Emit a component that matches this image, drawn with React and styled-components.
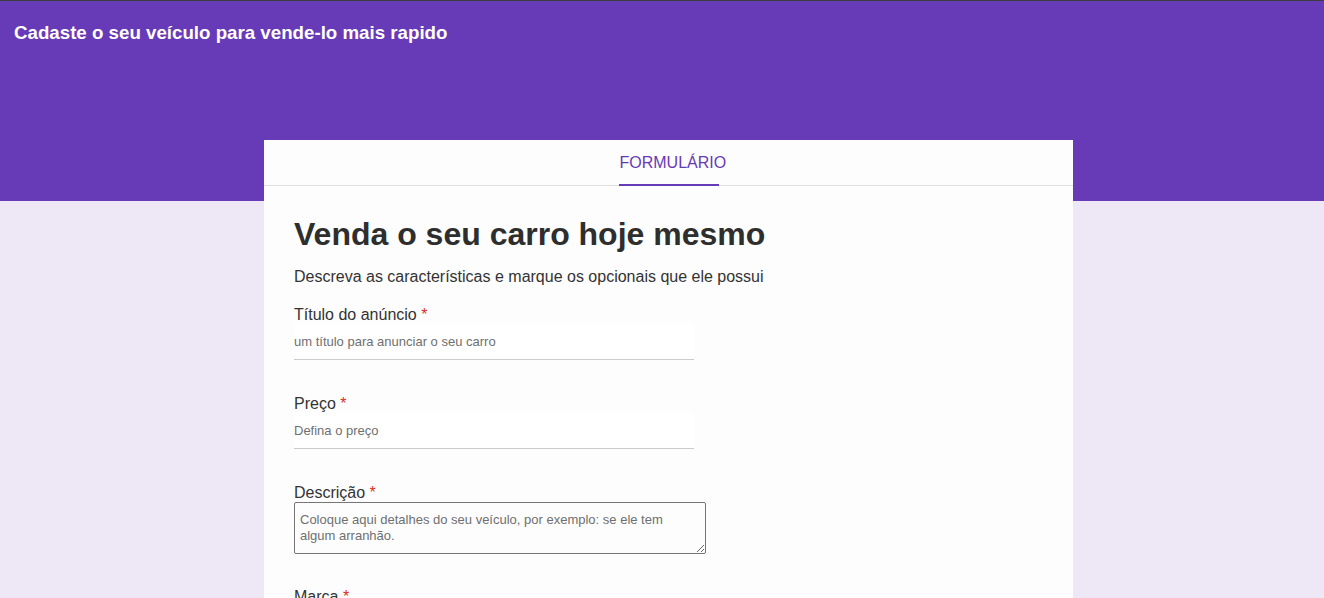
import React from 'react';
import styled, { createGlobalStyle } from 'styled-components';

const GlobalStyle = createGlobalStyle`
  body {
    margin: 0;
    background: #ede7f6;
    font-family: 'Liberation Sans', Arial, sans-serif;
    border-top: 1px solid #3c3c3c;
  }
`;

const Header = styled.header`
  height: 200px;
  background: #673ab7;
  padding: 21px 14px 0;
  box-sizing: border-box;
`;

const HeaderTitle = styled.h1`
  margin: 0;
  color: #ffffff;
  font-size: 18.72px;
  font-weight: bold;
  line-height: 22px;
`;

const Card = styled.main`
  width: 809px;
  margin: -61px 0 0 264px;
  background: #fdfdfd;
  min-height: 500px;
`;

const TabBar = styled.nav`
  display: flex;
  justify-content: center;
  height: 45px;
  border-bottom: 1px solid #dedede;
`;

const Tab = styled.div`
  position: relative;
  width: 100px;
  padding-left: 1px;
  box-sizing: border-box;
  display: flex;
  align-items: center;
  justify-content: flex-start;
  white-space: nowrap;
  font-size: 16px;
  color: ${p => (p.$active ? '#673ab7' : '#555')};

  &::after {
    content: '';
    position: absolute;
    left: 0;
    right: 0;
    bottom: -1px;
    height: 2px;
    background: ${p => (p.$active ? '#673ab7' : 'transparent')};
  }
`;

const Body = styled.section`
  padding: 30px 30px 0;
  color: #333333;
`;

const Title = styled.h2`
  margin: 0 0 15px;
  font-size: 32px;
  line-height: 37px;
  font-weight: bold;
  color: #2e2e2e;
`;

const Subtitle = styled.p`
  margin: 0 0 20px;
  font-size: 16px;
  line-height: 18px;
`;

const Field = styled.div`
  display: flex;
  flex-direction: column;
  margin-bottom: ${p => p.$gap || 35}px;
`;

const Label = styled.label`
  font-size: 16px;
  line-height: 18px;
  color: #333;
`;

const Required = styled.span`
  color: #d93025;
`;

const Input = styled.input`
  width: 400px;
  height: 36px;
  box-sizing: border-box;
  border: none;
  border-bottom: 1px solid #cccccc;
  background: #ffffff;
  padding: 0;
  font-family: 'Liberation Sans', Arial, sans-serif;
  font-size: 13px;
  color: #333;
  outline: none;

  &::placeholder {
    color: #6f6f6f;
  }
`;

const TextArea = styled.textarea`
  display: block;
  width: 412px;
  height: 52px;
  box-sizing: border-box;
  border: 1px solid #767676;
  border-radius: 2px;
  padding: 9px 5px 8px;
  font-family: 'Liberation Sans', Arial, sans-serif;
  font-size: 13px;
  line-height: 16px;
  background: #fdfdfd;
  outline: none;

  &::placeholder {
    color: #6f6f6f;
  }
`;

function RequiredLabel({ children }) {
  return (
    <Label>
      {children} <Required>*</Required>
    </Label>
  );
}

export default function App() {
  return (
    <>
      <GlobalStyle />
      <Header>
        <HeaderTitle>Cadaste o seu veículo para vende-lo mais rapido</HeaderTitle>
      </Header>
      <Card>
        <TabBar>
          <Tab $active>FORMULÁRIO</Tab>
        </TabBar>
        <Body>
          <Title>Venda o seu carro hoje mesmo</Title>
          <Subtitle>Descreva as características e marque os opcionais que ele possui</Subtitle>
          <Field>
            <RequiredLabel>Título do anúncio</RequiredLabel>
            <Input placeholder="um título para anunciar o seu carro" />
          </Field>
          <Field>
            <RequiredLabel>Preço</RequiredLabel>
            <Input placeholder="Defina o preço" />
          </Field>
          <Field $gap={34}>
            <RequiredLabel>Descrição</RequiredLabel>
            <TextArea placeholder="Coloque aqui detalhes do seu veículo, por exemplo: se ele tem algum arranhão." />
          </Field>
          <Field>
            <RequiredLabel>Marca</RequiredLabel>
            <Input placeholder="Informe a marca" />
          </Field>
        </Body>
      </Card>
    </>
  );
}
